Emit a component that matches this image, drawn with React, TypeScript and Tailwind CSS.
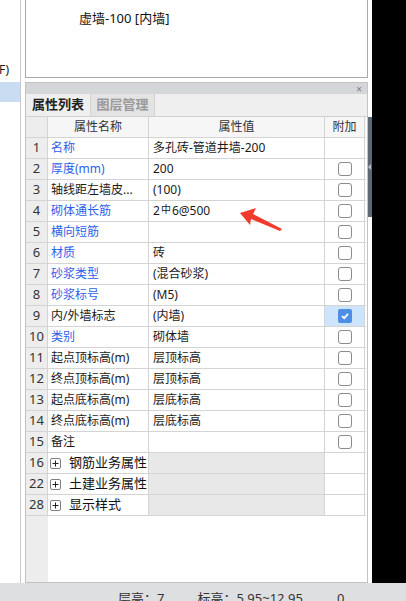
import React from 'react';

type Row = {
  no: string;
  name: string;
  value?: React.ReactNode;
  blue?: boolean;
  check?: 'none' | 'off' | 'on';
  group?: boolean;
};

const rows: Row[] = [
  { no: '1', name: '名称', value: '多孔砖-管道井墙-200', blue: true, check: 'none' },
  { no: '2', name: '厚度(mm)', value: '200', blue: true, check: 'off' },
  { no: '3', name: '轴线距左墙皮...', value: '(100)', check: 'off' },
  {
    no: '4',
    name: '砌体通长筋',
    value: (
      <span>
        2<span className="text-[10px] relative -top-[2px] mx-[1px]">中</span>6@500
      </span>
    ),
    blue: true,
    check: 'off',
  },
  { no: '5', name: '横向短筋', value: '', blue: true, check: 'off' },
  { no: '6', name: '材质', value: '砖', blue: true, check: 'off' },
  { no: '7', name: '砂浆类型', value: '(混合砂浆)', blue: true, check: 'off' },
  { no: '8', name: '砂浆标号', value: '(M5)', blue: true, check: 'off' },
  { no: '9', name: '内/外墙标志', value: '(内墙)', check: 'on' },
  { no: '10', name: '类别', value: '砌体墙', blue: true, check: 'off' },
  { no: '11', name: '起点顶标高(m)', value: '层顶标高', check: 'off' },
  { no: '12', name: '终点顶标高(m)', value: '层顶标高', check: 'off' },
  { no: '13', name: '起点底标高(m)', value: '层底标高', check: 'off' },
  { no: '14', name: '终点底标高(m)', value: '层底标高', check: 'off' },
  { no: '15', name: '备注', value: '', check: 'off' },
  { no: '16', name: '钢筋业务属性', group: true },
  { no: '22', name: '土建业务属性', group: true },
  { no: '28', name: '显示样式', group: true },
];

const Checkbox = ({ on }: { on?: boolean }) =>
  on ? (
    <div className="w-[14px] h-[14px] rounded-[2px] bg-[#4d8fe6] flex items-center justify-center">
      <svg width="10" height="10" viewBox="0 0 10 10">
        <path d="M2 5.2 L4.2 7.2 L8 2.8" stroke="#fff" strokeWidth="1.8" fill="none" />
      </svg>
    </div>
  ) : (
    <div className="w-[14px] h-[14px] rounded-[3px] border border-[#8c8c8c] bg-white" />
  );

const PlusBox = () => (
  <div className="w-[11px] h-[11px] rounded-[2px] border border-[#808080] flex items-center justify-center bg-white">
    <svg width="7" height="7" viewBox="0 0 7 7">
      <path d="M0.5 3.5 H6.5 M3.5 0.5 V6.5" stroke="#222" strokeWidth="1" />
    </svg>
  </div>
);

const cols = 'grid grid-cols-[22px_101px_176px_40px]';

export default function App() {
  return (
    <div
      className="w-[406px] h-[601px] overflow-hidden bg-white flex flex-col text-[12px] text-[#1a1a1a] relative"
      style={{ fontFamily: '"Noto Sans", "Noto Sans CJK SC", sans-serif' }}
    >
      <div className="h-[583px] flex">
        {/* left tree strip */}
        <div className="w-[20px] flex flex-col">
          <div className="h-[63px]" />
          <div className="h-[14px] leading-[14px] text-[12px] pl-[0px] -ml-[1px]">F)</div>
          <div className="h-[5px]" />
          <div className="h-[20px] bg-[#cadcf2]" />
        </div>
        <div className="w-[1px] bg-[#c9c9c9]" />
        <div className="w-[4px]" />

        {/* main column */}
        <div className="w-[343px] flex flex-col">
          <div className="h-[78px] border border-t-0 border-[#a9a9a9] pl-[53px] pt-[9px]">
            <span className="text-[13px] leading-[18px] text-[#111]">虚墙-100 [内墙]</span>
          </div>
          <div className="h-[4px]" />
          <div className="flex-1 border border-[#c3c3c3] flex flex-col">
            <div className="h-[11px] bg-[#d5d6da] flex items-center justify-end pr-[5px]">
              <span className="text-[10px] leading-[10px] text-[#7d7d7d]">×</span>
            </div>
            <div className="h-[23px] bg-[#efefef] flex border-b border-[#d0d0d0]">
              <div className="w-[64px] flex items-center justify-center font-bold text-[13px] text-[#222]">
                属性列表
              </div>
              <div className="w-[65px] flex items-center justify-center text-[13px] font-bold text-[#9a9a9a] bg-[#e3e3e3] border-l border-r border-[#d2d2d2]">
                图层管理
              </div>
            </div>

            {/* table */}
            <div className="w-[340px] flex-1 flex flex-col">
              <div className={`${cols} h-[21px] border-b border-[#d4d4d4] bg-[#f6f6f6]`}>
                <div className="bg-[#ededed] border-r border-[#d4d4d4]" />
                <div className="border-r border-[#d4d4d4] flex items-center justify-center text-[#333]">属性名称</div>
                <div className="border-r border-[#d4d4d4] flex items-center justify-center text-[#333]">属性值</div>
                <div className="border-r border-[#d4d4d4] flex items-center justify-center text-[#333]">附加</div>
              </div>
              {rows.map((r) => (
                <div key={r.no} className={`${cols} h-[21px] border-b border-[#d4d4d4]`}>
                  <div className="bg-[#ededed] border-r border-[#d4d4d4] flex items-center justify-center text-[13px] text-[#333]">
                    {r.no}
                  </div>
                  {r.group ? (
                    <>
                      <div className="border-r border-[#d4d4d4] flex items-center pl-[2px] gap-[8px]">
                        <PlusBox />
                        <span className="text-[13px] text-[#111]">{r.name}</span>
                      </div>
                      <div className="border-r border-[#d4d4d4] bg-[#e8e8e8]" />
                      <div className="border-r border-[#d4d4d4]" />
                    </>
                  ) : (
                    <>
                      <div
                        className={`border-r border-[#d4d4d4] flex items-center pl-[3px] whitespace-nowrap overflow-hidden ${
                          r.blue ? 'text-[#2f5fe8]' : 'text-[#1a1a1a]'
                        }`}
                      >
                        {r.name}
                      </div>
                      <div className="border-r border-[#d4d4d4] flex items-center pl-[4px] whitespace-nowrap text-[#1a1a1a]">
                        {r.value}
                      </div>
                      <div
                        className={`border-r border-[#d4d4d4] flex items-center justify-center ${
                          r.check === 'on' ? 'bg-[#cde5fb]' : ''
                        }`}
                      >
                        {r.check === 'off' && <Checkbox />}
                        {r.check === 'on' && <Checkbox on />}
                      </div>
                    </>
                  )}
                </div>
              ))}
              <div className="flex-1 flex">
                <div className="w-[22px] bg-[#ededed]" />
              </div>
            </div>
          </div>
        </div>

        {/* scrollbar */}
        <div className="w-[4px] flex flex-col">
          <div className="h-[117px]" />
          <div className="h-[100px] bg-[#5e6873] flex items-center">
            <div className="w-0 h-0 border-y-[3px] border-y-transparent border-r-[3px] border-r-[#b9bec4]" />
          </div>
        </div>
        <div className="flex-1 bg-black" />
      </div>

      {/* status bar */}
      <div className="h-[18px] bg-[#dedfe1] flex text-[13px] text-[#333] leading-[18px] pt-[6px]">
        <span className="ml-[118px]">层高：7</span>
        <span className="ml-[33px]">标高：5.95~12.95</span>
        <span className="ml-[34px]">0</span>
      </div>

      {/* red annotation arrow */}
      <svg className="absolute left-0 top-0 pointer-events-none" width="406" height="601">
        <polygon
          points="240,213 256,208 253,214 282,229 280,231 251,219 250,225"
          fill="#f2392c"
        />
      </svg>
    </div>
  );
}
